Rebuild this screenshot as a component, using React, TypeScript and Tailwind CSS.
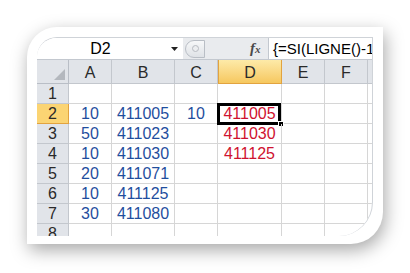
const font = "font-['Liberation_Sans',Arial,sans-serif]";

type Row = { n: number; a?: string; b?: string; c?: string; d?: string };

const rows: Row[] = [
  { n: 1 },
  { n: 2, a: "10", b: "411005", c: "10", d: "411005" },
  { n: 3, a: "50", b: "411023", d: "411030" },
  { n: 4, a: "10", b: "411030", d: "411125" },
  { n: 5, a: "20", b: "411071" },
  { n: 6, a: "10", b: "411125" },
  { n: 7, a: "30", b: "411080" },
  { n: 8 },
];

const cols = ["A", "B", "C", "D", "E", "F"];

function FormulaBar() {
  return (
    <div className="flex h-[22px] border-b border-[#c3c8cf] text-[16px] text-black">
      {/* name box */}
      <div className="relative flex w-[146px] items-center bg-white">
        <span className="w-[127px] text-center leading-none">D2</span>
        <svg width="7" height="4" viewBox="0 0 7 4" className="absolute left-[134px] top-[9px]">
          <path d="M0 0h7L3.5 4z" fill="#222" />
        </svg>
      </div>
      <div className="relative flex w-[85px] items-center bg-[#e9ebee]">
        <div className="ml-[2px] flex h-[18px] w-[20px] items-center justify-center rounded-l-full border border-[#b9bec5] bg-gradient-to-b from-[#f7f8f9] to-[#dfe2e6]">
          <span className="h-[7px] w-[7px] rounded-full border border-[#b7bbc1] bg-[#eceef0]" />
        </div>
        <span className="absolute left-[67px] top-[3px] font-['Liberation_Serif',serif] text-[15px] font-bold italic leading-none text-[#4a4a4a]">
          f<span className="text-[11px]">x</span>
        </span>
      </div>
      <div className="flex flex-1 items-center overflow-hidden whitespace-nowrap border-l border-[#c3c8cf] bg-white pl-[4px] text-[15px] leading-none">
        {"{=SI(LIGNE()-1"}
      </div>
    </div>
  );
}

function Sheet() {
  const grid = "grid grid-cols-[32px_43px_63px_43px_64px_43px_43px_5px]";
  return (
    <div className={grid}>
      {/* header row */}
      <div className="relative h-[24px] border-b border-r border-[#b9bec6] bg-[#e1e4e9]">
        <svg width="11" height="11" viewBox="0 0 11 11" className="absolute bottom-[3px] right-[3px]">
          <path d="M11 0V11H0z" fill="#b4b8be" />
        </svg>
      </div>
      {cols.map((c) =>
        c === "D" ? (
          <div
            key={c}
            className="flex h-[24px] items-center justify-center border-x border-b border-[#e2a33f] bg-gradient-to-b from-[#fdeaa8] to-[#f6c85e] pt-[2px] leading-none text-[#2a2a2a]"
          >
            {c}
          </div>
        ) : (
          <div
            key={c}
            className="flex h-[24px] items-center justify-center border-b border-r border-[#c3c7cd] bg-[#e1e4e9] pt-[2px] leading-none text-[#2a2a2a]"
          >
            {c}
          </div>
        )
      )}
      <div className="h-[24px] border-b border-[#c3c7cd] bg-[#e1e4e9]" />

      {rows.map((r) => (
        <RowCells key={r.n} r={r} />
      ))}
    </div>
  );
}

function RowCells({ r }: { r: Row }) {
  const cell = "flex h-[20px] items-center justify-center border-b border-r border-[#d6d6d6] leading-none";
  const hdr =
    r.n === 2
      ? "flex h-[20px] items-center justify-center border-b border-r border-[#e2a33f] bg-[#fbd473] leading-none text-[#2a2a2a]"
      : "flex h-[20px] items-center justify-center border-b border-r border-[#c3c7cd] bg-[#e1e4e9] leading-none text-[#2a2a2a]";
  return (
    <>
      <div className={hdr}>{r.n}</div>
      <div className={cell + " text-[#1f4e9e]"}>{r.a}</div>
      <div className={cell + " text-[#1f4e9e]"}>{r.b}</div>
      <div className={cell + " text-[#1f4e9e]"}>{r.c}</div>
      <div className={cell + " relative text-[#cf1230]"}>
        {r.d}
        {r.n === 2 && (
          <>
            <span className="absolute -left-[1px] -top-[1px] bottom-[-2px] right-0 border-[3px] border-black" />
            <span className="absolute bottom-[-4px] right-[-3px] h-[6px] w-[6px] border border-white bg-black" />
          </>
        )}
      </div>
      <div className={cell} />
      <div className={cell} />
      <div className="h-[20px] border-b border-[#d6d6d6]" />
    </>
  );
}

export default function App() {
  return (
    <div className={`h-[273px] w-[410px] overflow-hidden bg-white pl-[27px] pt-[27px] ${font}`}>
      <div className="h-[217px] w-[356px] rounded-br-[32px] rounded-tl-[30px] bg-white px-[10px] pb-[8px] pt-[10px] shadow-[2px_6px_18px_rgba(0,0,0,0.35)]">
        <div className="h-[199px] w-[336px] overflow-hidden rounded-br-[34px] rounded-tl-[20px] border-r border-t border-[#cfd3d8] text-[16px]">
          <FormulaBar />
          <Sheet />
        </div>
      </div>
    </div>
  );
}
